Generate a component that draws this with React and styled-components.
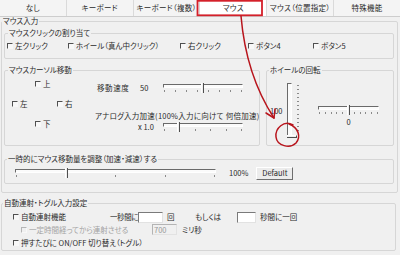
import React from "react";
import styled, { createGlobalStyle } from "styled-components";

const Global = createGlobalStyle`
  html, body { margin: 0; padding: 0; background: #f0f0f0; }
  body { width: 400px; height: 255px; overflow: hidden; }
`;

const FONT = `"Noto Sans CJK JP", "Noto Sans", sans-serif`;

const Window = styled.div`
  position: relative;
  width: 400px;
  height: 255px;
  background: #f0f0f0;
  font-family: ${FONT};
  font-size: 7.5px;
  font-feature-settings: "palt";
  line-height: 10px;
  color: #2a2a2a;
  overflow: hidden;
  display: flex;
  flex-direction: column;
`;

const TabBar = styled.div`
  display: flex;
  height: 17px;
  box-sizing: border-box;
  border-bottom: 1px solid #cdcdcd;
  flex: none;
`;

const Tab = styled.div`
  flex: 1;
  display: flex;
  align-items: center;
  justify-content: center;
  border-right: 1px solid #dadada;
  background: ${(p) => (p.$active ? "#ffffff" : "#f4f4f4")};
  letter-spacing: 0.3px;
  &:last-child { border-right: none; }
`;

const Body = styled.div`
  padding: 0 2px 0 1px;
  display: flex;
  flex-direction: column;
`;

const Group = styled.fieldset`
  margin: 0;
  margin-top: ${(p) => p.$mt || 0}px;
  padding: 0;
  min-width: 0;
  border: 1px solid #d6d6d6;
  border-radius: 2px;
  box-sizing: border-box;
  height: ${(p) => p.$h}px;
  width: ${(p) => (p.$w ? `${p.$w}px` : "auto")};
  flex: ${(p) => (p.$w ? "none" : "1 1 auto")};
`;

const Legend = styled.legend`
  margin-left: ${(p) => p.$x}px;
  padding: 0 1px;
  line-height: 10px;
  height: 10px;
  white-space: nowrap;
`;

const OuterContent = styled.div`
  padding: 2px 3px 0 2px;
  display: flex;
  flex-direction: column;
`;

const ClickRow = styled.div`
  display: grid;
  grid-template-columns: 61px 112px 68px 65px auto;
  padding: 3px 0 0 2px;
  height: 10px;
`;

const CheckLabel = styled.label`
  display: flex;
  align-items: center;
  gap: 2px;
  height: 10px;
  white-space: nowrap;
  color: ${(p) => (p.$disabled ? "#a3a3a3" : "inherit")};
  grid-column: ${(p) => p.$col || "auto"};
  grid-row: ${(p) => p.$row || "auto"};
`;

const Box = styled.span`
  width: 6px;
  height: 6px;
  flex: none;
  box-sizing: border-box;
  border-top: 1px solid ${(p) => (p.$disabled ? "#b5b5b5" : "#505050")};
  border-left: 1px solid ${(p) => (p.$disabled ? "#b5b5b5" : "#505050")};
  border-right: 1px solid #f8f8f8;
  border-bottom: 1px solid #f8f8f8;
  background: ${(p) => (p.$disabled ? "#f0f0f0" : "#f8f8f8")};
`;

const Check = ({ children, disabled, col, row }) => (
  <CheckLabel $disabled={disabled} $col={col} $row={row}>
    <Box $disabled={disabled} />
    <span>{children}</span>
  </CheckLabel>
);

const MidRow = styled.div`
  display: flex;
  gap: 6px;
  margin-top: 6px;
`;

const CursorContent = styled.div`
  display: flex;
  padding-left: 7px;
`;

const DirPad = styled.div`
  display: grid;
  grid-template-columns: 23px 22px auto;
  grid-template-rows: 10px 10px 10px;
  row-gap: 10px;
  width: 85px;
  margin-top: 4px;
  flex: none;
`;

const SpeedCol = styled.div`
  display: flex;
  flex-direction: column;
  margin-top: 8px;
`;

const SpeedRow = styled.div`
  display: grid;
  grid-template-columns: 43px 23px 80px;
  align-items: start;
  margin-top: ${(p) => p.$mt || 0}px;
  margin-left: ${(p) => p.$ml || 0}px;
  height: 10px;
  white-space: nowrap;
`;

const Text = styled.span`
  margin-left: ${(p) => p.$ml || 0}px;
  letter-spacing: ${(p) => p.$ls || 0}px;
  white-space: nowrap;
`;

const SliderBox = styled.div`
  position: relative;
  width: ${(p) => p.$w}px;
  height: 10px;
  display: flex;
  flex-direction: column;
  flex: none;
`;

const Channel = styled.div`
  margin-top: 1px;
  height: 4px;
  box-sizing: border-box;
  border-top: 1px solid #6a6a6a;
  border-left: 1px solid #6a6a6a;
  border-right: 1px solid #ffffff;
  border-bottom: 1px solid #ffffff;
  background: #fbfbfb;
`;

const Ticks = styled.div`
  display: flex;
  justify-content: space-between;
  margin-top: 2px;
  padding: 0 1px;
`;

const Tick = styled.span`
  width: 1px;
  height: 2px;
  background: #8a8a8a;
`;

const Thumb = styled.span`
  position: absolute;
  top: 0;
  width: 3px;
  height: 10px;
  margin-left: -2px;
  box-sizing: border-box;
  background: #f0f0f0;
  border-left: 1px solid #ffffff;
  border-right: 1px solid #4e4e4e;
`;

const Slider = ({ w, ticks, value }) => (
  <SliderBox $w={w}>
    <Channel />
    <Ticks>
      {Array.from({ length: ticks }).map((_, i) => (
        <Tick key={i} />
      ))}
    </Ticks>
    <Thumb style={{ left: `${value * 100}%` }} />
  </SliderBox>
);

const WheelContent = styled.div`
  display: flex;
  align-items: flex-start;
`;

const WheelLabel = styled.span`
  margin: 31px 0 0 3px;
  width: 17px;
  flex: none;
`;

const VSliderBox = styled.div`
  position: relative;
  margin-top: 8px;
  height: 55px;
  display: flex;
  flex: none;
`;

const VChannel = styled.div`
  width: 5px;
  height: 100%;
  box-sizing: border-box;
  border-top: 1px solid #6a6a6a;
  border-left: 1px solid #6a6a6a;
  border-right: 1px solid #ffffff;
  border-bottom: 1px solid #ffffff;
  background: #fbfbfb;
`;

const VTicks = styled.div`
  display: flex;
  flex-direction: column;
  justify-content: space-between;
  margin-left: 5px;
  padding: 2px 0 7px;
`;

const VTick = styled.span`
  width: 2px;
  height: 1px;
  background: #8a8a8a;
`;

const VThumb = styled.span`
  position: absolute;
  left: 0;
  bottom: 0;
  width: 10px;
  height: 3px;
  box-sizing: border-box;
  background: #f0f0f0;
  border-top: 1px solid #ffffff;
  border-bottom: 1px solid #4e4e4e;
  border-right: 1px solid #4e4e4e;
`;

const HCol = styled.div`
  display: flex;
  flex-direction: column;
  align-items: center;
  margin: 30px 0 0 19px;
  gap: 2px;
`;

const AdjustRow = styled.div`
  display: flex;
  align-items: center;
  margin: 2px 0 0 10px;
  height: 14px;
`;

const Percent = styled.span`
  margin-left: 13px;
`;

const Button = styled.button`
  margin-left: 8px;
  width: 37px;
  height: 13px;
  padding: 0;
  font: inherit;
  font-feature-settings: "palt";
  line-height: 10px;
  color: #2a2a2a;
  background: #ececec;
  box-sizing: border-box;
  border-top: 1px solid #ffffff;
  border-left: 1px solid #ffffff;
  border-right: 1px solid #6e6e6e;
  border-bottom: 1px solid #6e6e6e;
  border-radius: 0;
`;

const AutoContent = styled.div`
  display: flex;
  flex-direction: column;
  padding-left: 11px;
`;

const AutoRow = styled.div`
  display: grid;
  grid-template-columns: ${(p) => p.$cols};
  align-items: center;
  height: ${(p) => p.$h || 11}px;
  margin-top: ${(p) => p.$mt || 0}px;
  margin-left: ${(p) => p.$ml || 0}px;
  white-space: nowrap;
`;

const Input = styled.span`
  display: block;
  width: ${(p) => p.$w}px;
  height: 11px;
  box-sizing: border-box;
  border-top: 1px solid ${(p) => (p.$disabled ? "#b4b4b4" : "#7a7a7a")};
  border-left: 1px solid ${(p) => (p.$disabled ? "#b4b4b4" : "#7a7a7a")};
  border-right: 1px solid #e2e2e2;
  border-bottom: 1px solid #e2e2e2;
  background: ${(p) => (p.$disabled ? "#f0f0f0" : "#ffffff")};
  color: #9a9a9a;
  padding-left: 1px;
  line-height: 9px;
`;

const Overlay = styled.svg`
  position: absolute;
  left: 0;
  top: 0;
  pointer-events: none;
`;

export default function App() {
  return (
    <>
      <Global />
      <Window>
        <TabBar>
          <Tab>なし</Tab>
          <Tab>キーボード</Tab>
          <Tab>キーボード（複数）</Tab>
          <Tab $active>マウス</Tab>
          <Tab>マウス（位置指定）</Tab>
          <Tab>特殊機能</Tab>
        </TabBar>
        <Body>
          <Group $mt={-1} $h={177}>
            <Legend $x={0}>マウス入力</Legend>
            <OuterContent>
              <Group $h={31}>
                <Legend $x={3}>マウスクリックの割り当て</Legend>
                <ClickRow>
                  <Check>左クリック</Check>
                  <Check>ホイール（真ん中クリック）</Check>
                  <Check>右クリック</Check>
                  <Check>ボタン4</Check>
                  <Check>ボタン5</Check>
                </ClickRow>
              </Group>
              <MidRow>
                <Group $h={81} $w={256}>
                  <Legend $x={3}>マウスカーソル移動</Legend>
                  <CursorContent>
                    <DirPad>
                      <Check col={2} row={1}>上</Check>
                      <Check col={1} row={2}>左</Check>
                      <Check col={3} row={2}>右</Check>
                      <Check col={2} row={3}>下</Check>
                    </DirPad>
                    <SpeedCol>
                      <SpeedRow>
                        <Text $ls={0.6}>移動速度</Text>
                        <Text>50</Text>
                        <Slider w={80} ticks={8} value={0.5} />
                      </SpeedRow>
                      <SpeedRow $mt={18} $ml={-2}>
                        <Text $ls={0.25}>アナログ入力加速(100%入力に向けて 何倍加速)</Text>
                      </SpeedRow>
                      <SpeedRow $mt={1}>
                        <Text />
                        <Text $ml={-2}>x 1.0</Text>
                        <Slider w={80} ticks={6} value={0.2} />
                      </SpeedRow>
                    </SpeedCol>
                  </CursorContent>
                </Group>
                <Group $h={81}>
                  <Legend $x={2}>ホイールの回転</Legend>
                  <WheelContent>
                    <WheelLabel>100</WheelLabel>
                    <VSliderBox>
                      <VChannel />
                      <VTicks>
                        {Array.from({ length: 12 }).map((_, i) => (
                          <VTick key={i} />
                        ))}
                      </VTicks>
                      <VThumb />
                    </VSliderBox>
                    <HCol>
                      <Slider w={61} ticks={11} value={0.5} />
                      <span>0</span>
                    </HCol>
                  </WheelContent>
                </Group>
              </MidRow>
              <Group $mt={8} $h={30}>
                <Legend $x={2}>一時的にマウス移動量を調整（加速・減速）する</Legend>
                <AdjustRow>
                  <Slider w={201} ticks={5} value={0.26} />
                  <Percent>100%</Percent>
                  <Button>Default</Button>
                </AdjustRow>
              </Group>
            </OuterContent>
          </Group>
          <Group $mt={5} $h={53} $w={395}>
            <Legend $x={1}>自動連射・トグル入力設定</Legend>
            <AutoContent>
              <AutoRow $mt={3} $h={12} $cols="97px 28px 29px 28px 42px 23px auto">
                <Check>自動連射機能</Check>
                <Text $ls={-0.4}>一秒間に</Text>
                <Input $w={25} />
                <span>回</span>
                <span>もしくは</span>
                <Input $w={19} />
                <span>秒間に一回</span>
              </AutoRow>
              <AutoRow $mt={1} $ml={8} $cols="131px 30px auto">
                <Check disabled>一定時間経ってから連射させる</Check>
                <Input $w={25} $disabled>700</Input>
                <span>ミリ秒</span>
              </AutoRow>
              <AutoRow $mt={3} $h={10} $cols="auto">
                <Check>押すたびに ON/OFF 切り替え（トグル）</Check>
              </AutoRow>
            </AutoContent>
          </Group>
        </Body>
        <Overlay width="400" height="255" viewBox="0 0 400 255">
          <rect x="197.5" y="0.8" width="64.5" height="14.5" fill="none" stroke="#d4202a" strokeWidth="1.8" />
          <g fill="none" stroke="#b8141c" strokeWidth="1.5" strokeLinecap="round" strokeLinejoin="round">
            <path d="M241 16 Q246 75 274 118" />
            <path d="M266 113 L274 118 L275 109" />
            <path d="M293 125 C284 120 275 128 276 137 C277 146 290 149 296 143 C301 137 299 128 289 124" />
          </g>
        </Overlay>
      </Window>
    </>
  );
}
